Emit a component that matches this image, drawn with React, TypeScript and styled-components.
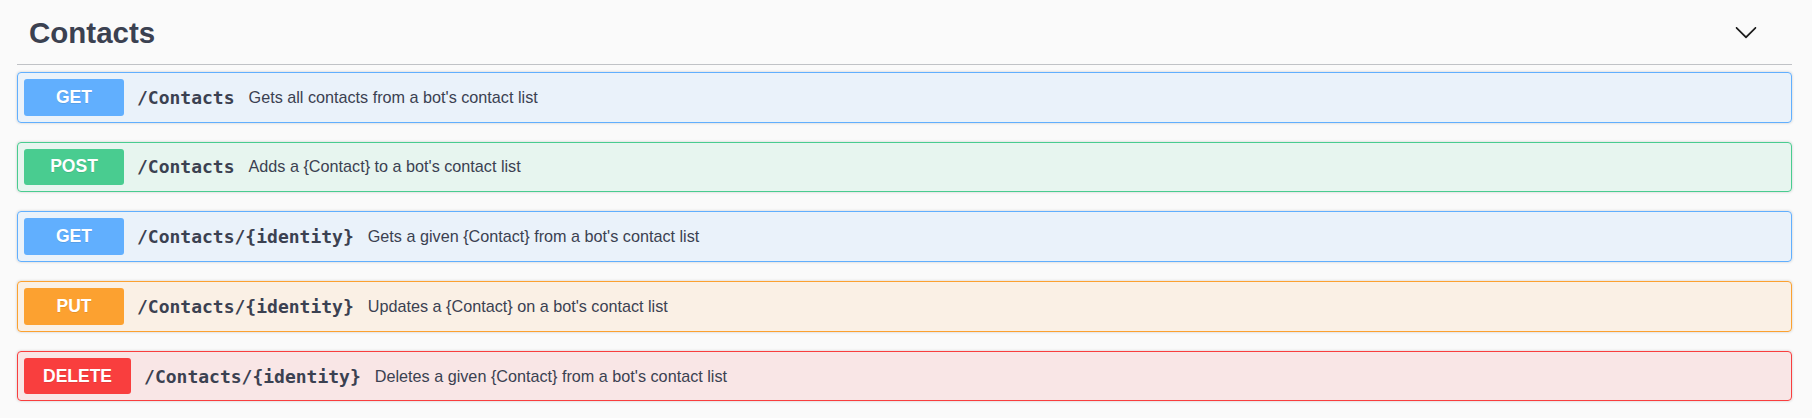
import React from "react";
import styled, { createGlobalStyle } from "styled-components";

type Method = "GET" | "POST" | "PUT" | "DELETE";

const methodColors: Record<Method, { main: string; bg: string }> = {
  GET: { main: "#61affe", bg: "rgba(97, 175, 254, 0.1)" },
  POST: { main: "#49cc90", bg: "rgba(73, 204, 144, 0.1)" },
  PUT: { main: "#fca130", bg: "rgba(252, 161, 48, 0.1)" },
  DELETE: { main: "#f93e3e", bg: "rgba(249, 62, 62, 0.1)" },
};

const GlobalStyle = createGlobalStyle`
  html, body {
    margin: 0;
    padding: 0;
    background: #fafafa;
  }
  body {
    font-family: "Liberation Sans", Arial, sans-serif;
    color: #3b4151;
  }
`;

const Section = styled.section`
  padding: 0 20px 0 17px;
`;

const TagHeader = styled.div`
  height: 63px;
  display: flex;
  align-items: center;
  justify-content: space-between;
  padding: 1px 34px 0 12px;
  border-bottom: 1px solid rgba(59, 65, 81, 0.3);
  margin-bottom: 7px;
`;

const TagTitle = styled.h4`
  margin: 0;
  font-size: 29.5px;
  font-weight: 700;
  color: #3b4151;
`;

const ToggleButton = styled.button`
  display: flex;
  align-items: center;
  background: none;
  border: none;
  padding: 0;
  margin-top: -2px;
  cursor: pointer;
`;

const OpBlock = styled.div<{ $method: Method }>`
  display: flex;
  align-items: center;
  padding: 6px;
  margin-bottom: 19.2px;
  border: 1px solid ${(p) => methodColors[p.$method].main};
  background: ${(p) => methodColors[p.$method].bg};
  border-radius: 4px;
  box-shadow: 0 0 3px rgba(0, 0, 0, 0.19);
`;

const MethodBadge = styled.span<{ $method: Method }>`
  min-width: 100px;
  height: 36.5px;
  box-sizing: border-box;
  padding: 0 19px;
  display: flex;
  align-items: center;
  justify-content: center;
  border-radius: 3px;
  background: ${(p) => methodColors[p.$method].main};
  color: #fff;
  font-size: 17.5px;
  font-weight: 700;
  text-shadow: 0 1px 0 rgba(0, 0, 0, 0.1);
  margin-right: 13px;
`;

const Path = styled.span`
  font-family: "DejaVu Sans Mono", "Liberation Mono", monospace;
  font-weight: 700;
  font-size: 18px;
  color: #3b4151;
  margin-right: 14px;
`;

const Description = styled.span`
  font-size: 16.2px;
  color: #3b4151;
`;

const ops: { method: Method; path: string; desc: string }[] = [
  { method: "GET", path: "/Contacts", desc: "Gets all contacts from a bot's contact list" },
  { method: "POST", path: "/Contacts", desc: "Adds a {Contact} to a bot's contact list" },
  { method: "GET", path: "/Contacts/{identity}", desc: "Gets a given {Contact} from a bot's contact list" },
  { method: "PUT", path: "/Contacts/{identity}", desc: "Updates a {Contact} on a bot's contact list" },
  { method: "DELETE", path: "/Contacts/{identity}", desc: "Deletes a given {Contact} from a bot's contact list" },
];

const Chevron = () => (
  <svg width="24" height="24" viewBox="0 0 20 20" aria-hidden="true">
    <path
      fill="#1b1b1b"
      d="M17.418 6.109c.272-.268.709-.268.979 0s.271.701 0 .969l-7.908 7.83c-.27.268-.707.268-.979 0l-7.908-7.830c-.27-.268-.27-.701 0-.969.271-.268.709-.268.979 0L10 13.25l7.418-7.141z"
    />
  </svg>
);

export default function App() {
  return (
    <>
      <GlobalStyle />
      <Section>
        <TagHeader>
          <TagTitle>Contacts</TagTitle>
          <ToggleButton aria-label="Collapse operation">
            <Chevron />
          </ToggleButton>
        </TagHeader>
        {ops.map((op, i) => (
          <OpBlock key={i} $method={op.method}>
            <MethodBadge $method={op.method}>{op.method}</MethodBadge>
            <Path>{op.path}</Path>
            <Description>{op.desc}</Description>
          </OpBlock>
        ))}
      </Section>
    </>
  );
}
